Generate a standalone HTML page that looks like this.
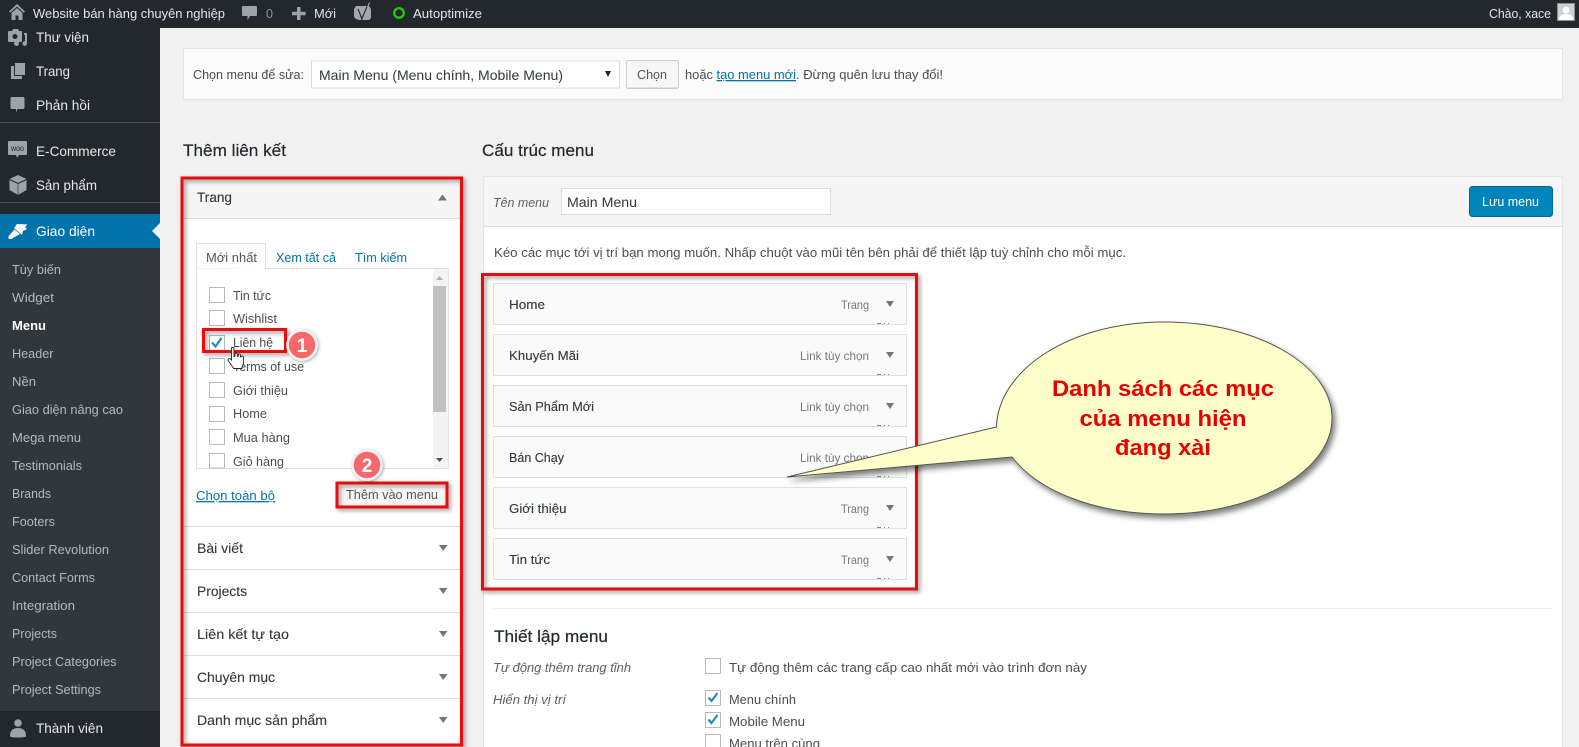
<!DOCTYPE html>
<html lang="vi"><head><meta charset="utf-8"><title>Menu</title>
<style>
html,body{margin:0;padding:0;background:#f1f1f1;overflow:hidden}
svg{display:block}
text{font-family:"Liberation Sans","DejaVu Sans",sans-serif;font-size:13px;fill:#4d4d4d;white-space:pre}
.bar text{fill:#e4e6e7}
.m text{font-size:14px;fill:#e6e7e8}
.s text{font-size:13px;fill:#b4b9be}
.h{font-size:17px;fill:#23282d;stroke:#23282d;stroke-width:.2px}
.b{font-size:14px;fill:#32373c;stroke:#32373c;stroke-width:.12px}
.i{font-style:italic;fill:#606060}
.l{fill:#0073aa}
.t{fill:#777}
.box{fill:#fff;stroke:#b4b9be;stroke-width:1}
.item{fill:#fafafa;stroke:#dfdfdf;stroke-width:1}
.red{fill:none;stroke:#e80808;stroke-width:3}
.ck{fill:none;stroke:#1e8cbe;stroke-width:2.2}
.ar{fill:#72777c}
</style></head><body>
<svg xmlns="http://www.w3.org/2000/svg" width="1579" height="747" viewBox="0 0 1579 747">
<defs>
<filter id="sh" x="-10%" y="-10%" width="120%" height="120%"><feDropShadow dx="2" dy="2" stdDeviation="2" flood-color="#000" flood-opacity=".45"/></filter>
<filter id="sh2" x="-10%" y="-10%" width="125%" height="125%"><feDropShadow dx="3" dy="4" stdDeviation="3" flood-color="#000" flood-opacity=".5"/></filter>
<filter id="sh3" x="-30%" y="-30%" width="160%" height="160%"><feDropShadow dx="1" dy="1" stdDeviation="1.5" flood-color="#000" flood-opacity=".35"/></filter>
</defs>

<rect width="1579" height="747" fill="#f1f1f1"/>

<!-- Sidebar -->
<rect x="0" y="0" width="160" height="747" fill="#23282d"/>
<rect x="0" y="122" width="160" height="1" fill="#4a4e52"/>
<rect x="0" y="202" width="160" height="1" fill="#4a4e52"/>
<rect x="0" y="214" width="160" height="34" fill="#0073aa"/>
<rect x="0" y="248" width="160" height="463" fill="#32373c"/>
<polygon points="160,223 152,231 160,239" fill="#f1f1f1"/>

<g fill="#9ea3a8">
<!-- media -->
<path d="M9 31h3l1-2h5l1 2h2a1 1 0 0 1 1 1v9a1 1 0 0 1-1 1H9a1 1 0 0 1-1-1v-9a1 1 0 0 1 1-1z"/>
<circle cx="15" cy="36.500" r="2.500" fill="#23282d"/>
<path d="M24 33h3v10.500a2.300 2.300 0 1 1-2-2.200V35h-1z"/>
<circle cx="16.500" cy="43.500" r="2.500"/>
<!-- pages -->
<path d="M15 63h10v12H15z"/><path d="M11 66h3v10h8v3H11z"/>
<!-- comments -->
<path d="M12 97h11a1.500 1.500 0 0 1 1.500 1.500v9a1.500 1.500 0 0 1-1.500 1.500h-5.500l-1.500 3.500V109h-4a1.500 1.500 0 0 1-1.500-1.500v-9A1.500 1.500 0 0 1 12 97z"/>
<!-- woo -->
<path d="M9 141h17a1 1 0 0 1 1 1v12a1 1 0 0 1-1 1h-7l-2 3-1-3H9a1 1 0 0 1-1-1v-12a1 1 0 0 1 1-1z"/>
<!-- product -->
<path d="M18 175l8.500 4v11l-8.500 5-8.500-5v-11z"/>
<!-- users -->
<circle cx="18" cy="723" r="3.800"/>
<path d="M10 736c0-6 3.500-8 8-8s8 2 8 8c0 .8-1 1.500-8 1.500s-8-.7-8-1.500z"/>
</g>
<path d="M9.500 179.500l8.500 4 8.500-4" fill="none" stroke="#23282d" stroke-width="1"/>
<path d="M18 183.500V195" fill="none" stroke="#23282d" stroke-width=".6"/>
<text x="11" y="151" style="font-size:8px;fill:#23282d" textLength="13" lengthAdjust="spacingAndGlyphs">woo</text>
<!-- brush -->
<path d="M17 224L27.500 224.500 25 227 27 229 23 231 22 235 14 228zM14.500 229.500L20 234 13 238C11 240 8.500 238.500 8.500 238.500S8 236 10 234.500z" fill="#fff"/>

<g class="m">
<text x="36" y="42" textLength="53" lengthAdjust="spacingAndGlyphs">Thư viện</text>
<text x="36" y="76" textLength="34" lengthAdjust="spacingAndGlyphs">Trang</text>
<text x="36" y="110" textLength="54" lengthAdjust="spacingAndGlyphs">Phản hồi</text>
<text x="36" y="156" textLength="80" lengthAdjust="spacingAndGlyphs">E-Commerce</text>
<text x="36" y="190" textLength="61" lengthAdjust="spacingAndGlyphs">Sản phẩm</text>
<text x="36" y="236" textLength="59" lengthAdjust="spacingAndGlyphs" style="fill:#fff">Giao diện</text>
<text x="36" y="733" textLength="67" lengthAdjust="spacingAndGlyphs">Thành viên</text>
</g>
<g class="s">
<text x="12" y="274" textLength="49" lengthAdjust="spacingAndGlyphs">Tùy biến</text>
<text x="12" y="302" textLength="42" lengthAdjust="spacingAndGlyphs">Widget</text>
<text x="12" y="330" textLength="34" lengthAdjust="spacingAndGlyphs" style="fill:#fff;font-weight:bold">Menu</text>
<text x="12" y="358" textLength="41.500" lengthAdjust="spacingAndGlyphs">Header</text>
<text x="12" y="386" textLength="24" lengthAdjust="spacingAndGlyphs">Nền</text>
<text x="12" y="414" textLength="111" lengthAdjust="spacingAndGlyphs">Giao diện nâng cao</text>
<text x="12" y="442" textLength="69" lengthAdjust="spacingAndGlyphs">Mega menu</text>
<text x="12" y="470" textLength="70" lengthAdjust="spacingAndGlyphs">Testimonials</text>
<text x="12" y="498" textLength="39" lengthAdjust="spacingAndGlyphs">Brands</text>
<text x="12" y="526" textLength="43" lengthAdjust="spacingAndGlyphs">Footers</text>
<text x="12" y="554" textLength="97" lengthAdjust="spacingAndGlyphs">Slider Revolution</text>
<text x="12" y="582" textLength="83" lengthAdjust="spacingAndGlyphs">Contact Forms</text>
<text x="12" y="610" textLength="63" lengthAdjust="spacingAndGlyphs">Integration</text>
<text x="12" y="638" textLength="45" lengthAdjust="spacingAndGlyphs">Projects</text>
<text x="12" y="666" textLength="104.500" lengthAdjust="spacingAndGlyphs">Project Categories</text>
<text x="12" y="694" textLength="89" lengthAdjust="spacingAndGlyphs">Project Settings</text>
</g>

<!-- Top bar -->
<rect x="0" y="0" width="1579" height="28" fill="#23282d"/>
<g class="bar">
<path d="M17 4l8 7.500-1.200 1.200L17 6.500l-6.800 6.200L9 11.500zM11.500 13L17 8l5.500 5v7h-4v-4.500h-3V20h-4z" fill="#9ea3a8"/>
<text x="33" y="18" textLength="192" lengthAdjust="spacingAndGlyphs">Website bán hàng chuyên nghiệp</text>
<path d="M243 6h13a1 1 0 0 1 1 1v8a1 1 0 0 1-1 1h-6l-2.500 4v-4H243a1 1 0 0 1-1-1V7a1 1 0 0 1 1-1z" fill="#9ea3a8"/>
<text x="266" y="18" textLength="7" lengthAdjust="spacingAndGlyphs" style="fill:#8a8f94">0</text>
<path d="M297 7h3.500v4.700h5v3.600h-5V20H297v-4.700h-5v-3.600h5z" fill="#9ea3a8"/>
<text x="314" y="18" textLength="22" lengthAdjust="spacingAndGlyphs">Mới</text>
<path d="M356 6h13l2 3v9l-2 2h-10l-3-1-2-2V9z" fill="#a3a7ab"/>
<path d="M358 9l4 10M368.500 3l-7.500 18-2 1" fill="none" stroke="#23282d" stroke-width="1.100"/>
<path d="M369.500 2.500l-2 5" fill="none" stroke="#a3a7ab" stroke-width="1.100"/>
<circle cx="399" cy="13" r="4.800" fill="none" stroke="#27c60b" stroke-width="2.400"/>
<text x="413" y="18" textLength="69" lengthAdjust="spacingAndGlyphs">Autoptimize</text>
<text x="1489" y="18" textLength="62" lengthAdjust="spacingAndGlyphs">Chào, xace</text>
<rect x="1557.500" y="3.500" width="17" height="17" fill="#cfcfcf" stroke="#8c8f94"/>
<circle cx="1566" cy="10" r="3.500" fill="#fff"/>
<path d="M1559 20c0-5 3-6 7-6s7 1 7 6z" fill="#fff"/>
</g>

<!-- Select menu panel -->
<rect x="183.500" y="48.500" width="1379" height="51" fill="#fbfbfb" stroke="#e5e5e5"/>
<text x="193" y="79" textLength="111" lengthAdjust="spacingAndGlyphs">Chọn menu để sửa:</text>
<rect x="311.500" y="61" width="308" height="27" fill="#fff" stroke="#ddd"/>
<text x="319" y="80" textLength="244" lengthAdjust="spacingAndGlyphs" style="font-size:14px;fill:#32373c">Main Menu (Menu chính, Mobile Menu)</text>
<polygon points="605,71 611,71 608,77" fill="#222"/>
<rect x="626.500" y="60.500" width="52" height="28" rx="2" fill="#f7f7f7" stroke="#ccc"/>
<rect x="627" y="87.500" width="51" height="1.500" fill="#ccc"/>
<text x="637" y="79" textLength="30" lengthAdjust="spacingAndGlyphs" style="fill:#555">Chọn</text>
<text x="685" y="79" textLength="28" lengthAdjust="spacingAndGlyphs">hoặc</text>
<text x="716.500" y="79" textLength="79.500" lengthAdjust="spacingAndGlyphs" class="l" style="text-decoration:underline">tạo menu mới</text>
<text x="796" y="79" textLength="147" lengthAdjust="spacingAndGlyphs">. Đừng quên lưu thay đổi!</text>

<text x="183" y="156" textLength="103" lengthAdjust="spacingAndGlyphs" class="h">Thêm liên kết</text>
<text x="482" y="156" textLength="112" lengthAdjust="spacingAndGlyphs" class="h">Cấu trúc menu</text>

<!-- Left accordion -->
<rect x="183" y="178" width="277" height="566" fill="#fff"/>
<rect x="183" y="178" width="277" height="40" fill="#f5f5f5"/>
<rect x="183" y="218" width="277" height="1" fill="#ddd"/>
<text x="197" y="202" textLength="35" lengthAdjust="spacingAndGlyphs" class="b">Trang</text>
<polygon points="438,200.500 447,200.500 442.500,194.500" class="ar"/>

<rect x="196.500" y="268.500" width="252" height="200" class="box" style="stroke:#dfdfdf"/>
<path d="M196.500 268.500V243.500H265.500V269" fill="#fff" stroke="#dfdfdf"/>
<text x="206" y="262" textLength="51" lengthAdjust="spacingAndGlyphs" style="fill:#555">Mới nhất</text>
<text x="276" y="262" textLength="60" lengthAdjust="spacingAndGlyphs" class="l">Xem tất cả</text>
<text x="355" y="262" textLength="52" lengthAdjust="spacingAndGlyphs" class="l">Tìm kiếm</text>
<rect x="433" y="269" width="15" height="199" fill="#f4f4f4"/>
<rect x="433" y="286" width="13" height="126" fill="#c1c1c1"/>
<polygon points="436,280 443,280 439.500,276" fill="#b0b0b0"/>
<polygon points="436,458 443,458 439.500,462" fill="#555"/>

<g fill="#fff" stroke="#b4b9be">
<rect x="209.500" y="287.500" width="15" height="15"/>
<rect x="209.500" y="310.500" width="15" height="15"/>
<rect x="209.500" y="335.500" width="15" height="15"/>
<rect x="209.500" y="358.500" width="15" height="15"/>
<rect x="209.500" y="382.500" width="15" height="15"/>
<rect x="209.500" y="406.500" width="15" height="15"/>
<rect x="209.500" y="429.500" width="15" height="15"/>
<rect x="209.500" y="453.500" width="15" height="14.500"/>
</g>
<path d="M212 342.500l3.500 4 6-8.500" class="ck"/>
<text x="233" y="300" textLength="38" lengthAdjust="spacingAndGlyphs">Tin tức</text>
<text x="233" y="323" textLength="44" lengthAdjust="spacingAndGlyphs">Wishlist</text>
<text x="233" y="347" textLength="40" lengthAdjust="spacingAndGlyphs">Liên hệ</text>
<text x="233" y="371" textLength="71" lengthAdjust="spacingAndGlyphs">Terms of use</text>
<text x="233" y="395" textLength="55" lengthAdjust="spacingAndGlyphs">Giới thiệu</text>
<text x="233" y="418" textLength="34" lengthAdjust="spacingAndGlyphs">Home</text>
<text x="233" y="442" textLength="57" lengthAdjust="spacingAndGlyphs">Mua hàng</text>
<text x="233" y="466" textLength="51" lengthAdjust="spacingAndGlyphs">Giỏ hàng</text>

<text x="196" y="500" textLength="79" lengthAdjust="spacingAndGlyphs" class="l" style="text-decoration:underline">Chọn toàn bộ</text>
<rect x="337" y="483" width="110" height="23" fill="#f7f7f7"/>
<text x="346" y="499" textLength="92" lengthAdjust="spacingAndGlyphs" style="fill:#555">Thêm vào menu</text>

<g fill="#ddd">
<rect x="183" y="526" width="277" height="1"/>
<rect x="183" y="569" width="277" height="1"/>
<rect x="183" y="612" width="277" height="1"/>
<rect x="183" y="655" width="277" height="1"/>
<rect x="183" y="698" width="277" height="1"/>
</g>
<text x="197" y="553" textLength="46" lengthAdjust="spacingAndGlyphs" class="b">Bài viết</text>
<text x="197" y="596" textLength="50" lengthAdjust="spacingAndGlyphs" class="b">Projects</text>
<text x="197" y="639" textLength="92" lengthAdjust="spacingAndGlyphs" class="b">Liên kết tự tạo</text>
<text x="197" y="682" textLength="78" lengthAdjust="spacingAndGlyphs" class="b">Chuyên mục</text>
<text x="197" y="725" textLength="130" lengthAdjust="spacingAndGlyphs" class="b">Danh mục sản phẩm</text>
<g class="ar">
<polygon points="439,545 447.500,545 443.200,551"/>
<polygon points="439,588 447.500,588 443.200,594"/>
<polygon points="439,631 447.500,631 443.200,637"/>
<polygon points="439,674 447.500,674 443.200,680"/>
<polygon points="439,717 447.500,717 443.200,723"/>
</g>

<!-- Right panel -->
<rect x="483.500" y="176.500" width="1079" height="580" fill="#fff" stroke="#e5e5e5"/>
<rect x="484" y="177" width="1078" height="49" fill="#f5f5f5"/>
<rect x="484" y="226" width="1078" height="1" fill="#dfdfdf"/>
<text x="493" y="207" textLength="56" lengthAdjust="spacingAndGlyphs" class="i">Tên menu</text>
<rect x="561.500" y="188.500" width="269" height="26" fill="#fff" stroke="#ddd"/>
<text x="567" y="207" textLength="70" lengthAdjust="spacingAndGlyphs" style="font-size:14px;fill:#32373c">Main Menu</text>
<rect x="1469.500" y="186.500" width="83" height="30" rx="3" fill="#0085ba" stroke="#006799"/>
<text x="1482" y="206" textLength="57" lengthAdjust="spacingAndGlyphs" style="fill:#fff">Lưu menu</text>
<text x="494" y="257" textLength="632" lengthAdjust="spacingAndGlyphs">Kéo các mục tới vị trí bạn mong muốn. Nhấp chuột vào mũi tên bên phải để thiết lập tuỳ chỉnh cho mỗi mục.</text>

<g class="item">
<rect x="493.500" y="283.500" width="413" height="41"/>
<rect x="493.500" y="334.500" width="413" height="41"/>
<rect x="493.500" y="385.500" width="413" height="41"/>
<rect x="493.500" y="436.500" width="413" height="41"/>
<rect x="493.500" y="487.500" width="413" height="41"/>
<rect x="493.500" y="538.500" width="413" height="41"/>
</g>
<g fill="#888">
<rect x="877" y="323" width="4" height="1"/><rect x="884" y="323" width="1" height="1"/><rect x="888" y="323" width="1" height="1"/>
<rect x="877" y="374" width="4" height="1"/><rect x="884" y="374" width="1" height="1"/><rect x="888" y="374" width="1" height="1"/>
<rect x="877" y="425" width="4" height="1"/><rect x="884" y="425" width="1" height="1"/><rect x="888" y="425" width="1" height="1"/>
<rect x="877" y="476" width="4" height="1"/><rect x="884" y="476" width="1" height="1"/><rect x="888" y="476" width="1" height="1"/>
<rect x="877" y="527" width="4" height="1"/><rect x="884" y="527" width="1" height="1"/><rect x="888" y="527" width="1" height="1"/>
<rect x="877" y="578" width="4" height="1"/><rect x="884" y="578" width="1" height="1"/><rect x="888" y="578" width="1" height="1"/>
</g>
<g>
<text x="509" y="309" textLength="36" lengthAdjust="spacingAndGlyphs" class="b" style="font-size:13px">Home</text>
<text x="509" y="360" textLength="70" lengthAdjust="spacingAndGlyphs" class="b" style="font-size:13px">Khuyến Mãi</text>
<text x="509" y="411" textLength="85" lengthAdjust="spacingAndGlyphs" class="b" style="font-size:13px">Sản Phẩm Mới</text>
<text x="509" y="462" textLength="55" lengthAdjust="spacingAndGlyphs" class="b" style="font-size:13px">Bán Chạy</text>
<text x="509" y="513" textLength="57.500" lengthAdjust="spacingAndGlyphs" class="b" style="font-size:13px">Giới thiệu</text>
<text x="509" y="564" textLength="41" lengthAdjust="spacingAndGlyphs" class="b" style="font-size:13px">Tin tức</text>
</g>
<g>
<text x="841" y="309" textLength="28" lengthAdjust="spacingAndGlyphs" class="t" style="font-size:12px">Trang</text>
<text x="800" y="360" textLength="69" lengthAdjust="spacingAndGlyphs" class="t" style="font-size:12px">Link tùy chọn</text>
<text x="800" y="411" textLength="69" lengthAdjust="spacingAndGlyphs" class="t" style="font-size:12px">Link tùy chọn</text>
<text x="800" y="462" textLength="69" lengthAdjust="spacingAndGlyphs" class="t" style="font-size:12px">Link tùy chọn</text>
<text x="841" y="513" textLength="28" lengthAdjust="spacingAndGlyphs" class="t" style="font-size:12px">Trang</text>
<text x="841" y="564" textLength="28" lengthAdjust="spacingAndGlyphs" class="t" style="font-size:12px">Trang</text>
</g>
<g class="ar">
<polygon points="886,301 894,301 890,307"/>
<polygon points="886,352 894,352 890,358"/>
<polygon points="886,403 894,403 890,409"/>
<polygon points="886,454 894,454 890,460"/>
<polygon points="886,505 894,505 890,511"/>
<polygon points="886,556 894,556 890,562"/>
</g>

<rect x="493" y="608" width="1059" height="1" fill="#eee"/>
<text x="494" y="642" textLength="114" lengthAdjust="spacingAndGlyphs" class="h">Thiết lập menu</text>
<text x="493" y="672" textLength="138" lengthAdjust="spacingAndGlyphs" class="i">Tự động thêm trang tĩnh</text>
<text x="493" y="704" textLength="73" lengthAdjust="spacingAndGlyphs" class="i">Hiển thị vị trí</text>
<g fill="#fff" stroke="#b4b9be">
<rect x="705.500" y="658.500" width="15" height="15"/>
<rect x="705.500" y="690.500" width="15" height="15"/>
<rect x="705.500" y="712.500" width="15" height="15"/>
<rect x="705.500" y="734.500" width="15" height="15"/>
</g>
<path d="M708.500 697.500l3 3.500 6-8M708.500 719.500l3 3.500 6-8" class="ck"/>
<text x="729" y="672" textLength="358" lengthAdjust="spacingAndGlyphs">Tự động thêm các trang cấp cao nhất mới vào trình đơn này</text>
<text x="729" y="704" textLength="67" lengthAdjust="spacingAndGlyphs">Menu chính</text>
<text x="729" y="726" textLength="76" lengthAdjust="spacingAndGlyphs">Mobile Menu</text>
<text x="729" y="748" textLength="91" lengthAdjust="spacingAndGlyphs">Menu trên cùng</text>

<!-- Red annotation boxes -->
<g filter="url(#sh)">
<rect x="182" y="178" width="279.500" height="567" class="red"/>
<rect x="203.500" y="329.500" width="82" height="22" class="red"/>
<rect x="337" y="483" width="110" height="24" class="red"/>
<rect x="482.500" y="274.500" width="434" height="314.500" class="red"/>
</g>

<!-- Badges -->
<g filter="url(#sh3)">
<circle cx="302" cy="345" r="14.500" fill="#f7686c" stroke="#f3f3f3" stroke-width="2.500"/>
<circle cx="367" cy="465" r="14.500" fill="#f7686c" stroke="#f3f3f3" stroke-width="2.500"/>
</g>
<text x="302" y="352" text-anchor="middle" style="font-size:19px;font-weight:bold;fill:#fff">1</text>
<text x="367" y="472" text-anchor="middle" style="font-size:19px;font-weight:bold;fill:#fff">2</text>

<!-- Hand cursor -->
<path d="M231.500 348.500c0-1.500 2.500-1.500 2.500 0v8l1-.5v-2c.3-1.200 2-1.200 2.300 0v2.500l1-.3v-1.500c.3-1.100 2-1.100 2.200.2v2l1-.3c.4-1 1.900-.8 1.900.4v6.500l-1.700 5h-8l-5.500-8c-.8-1.600 1-2.600 2.300-1.400l1 1z" fill="#fff" stroke="#222" stroke-width=".9"/>

<!-- Callout -->
<g filter="url(#sh2)">
<path d="M787 477L996.500 427C998 370 1070 322 1164 322C1257 322 1332 365 1332 418C1332 471 1257 514 1164 514C1095 514 1038 491 1012 457Z" fill="#ffffcc" stroke="#55554a" stroke-width="1"/>
</g>
<text x="1163" y="396" text-anchor="middle" textLength="222" lengthAdjust="spacingAndGlyphs" style="font-size:22px;font-weight:bold;fill:#e60000">Danh sách các mục</text>
<text x="1163" y="426" text-anchor="middle" textLength="167" lengthAdjust="spacingAndGlyphs" style="font-size:22px;font-weight:bold;fill:#e60000">của menu hiện</text>
<text x="1163" y="455" text-anchor="middle" textLength="96" lengthAdjust="spacingAndGlyphs" style="font-size:22px;font-weight:bold;fill:#e60000">đang xài</text>
</svg>
</body></html>
